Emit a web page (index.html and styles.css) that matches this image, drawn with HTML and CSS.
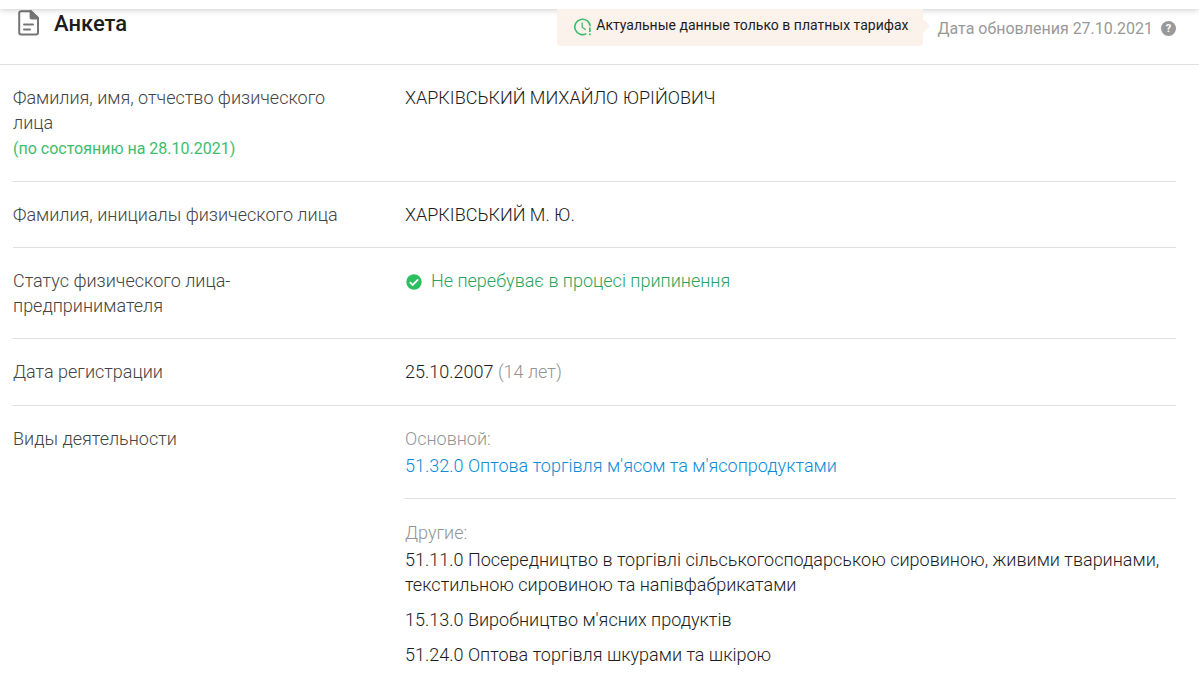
FILE: index.html
```html
<!DOCTYPE html>
<html lang="ru">
<head>
<meta charset="utf-8">
<meta name="viewport" content="width=device-width, initial-scale=1">
<title>Анкета</title>
<link rel="stylesheet" href="styles.css">
</head>
<body>
<div class="topbar"></div>
<main class="profile">
  <header class="profile-header">
    <h1 class="title">
      <svg class="title-icon" width="22" height="26" viewBox="0 0 22 26" aria-hidden="true">
        <path d="M3 1.2H13L20 8V22.5Q20 24.4 18 24.4H3.2Q1.2 24.4 1.2 22.5V3.2Q1.2 1.2 3.2 1.2Z" fill="none" stroke="#757575" stroke-width="2"/>
        <path d="M11.6 .4H13.4L20.8 7.6V9.4H13.6Q11.6 9.4 11.6 7.4Z" fill="#757575"/>
        <path d="M6 14.4H15M6 19.4H12" fill="none" stroke="#757575" stroke-width="2" stroke-linecap="round"/>
      </svg>
      <span>Анкета</span>
    </h1>
    <div class="update">
      <div class="notice">
        <svg class="notice-icon" width="18" height="18" viewBox="0 0 18 18" aria-hidden="true">
          <path d="M16.2 8.3A7.7 7.7 0 1 0 12.4 15.6" fill="none" stroke="#3dbd6c" stroke-width="1.6"/>
          <path d="M8.2 4.6V9.2L11.8 11.8" fill="none" stroke="#3dbd6c" stroke-width="1.3"/>
          <path d="M15.9 9.6V14M15.9 15.4V17.2" fill="none" stroke="#3dbd6c" stroke-width="1.7"/>
        </svg>
        <span>Актуальные данные только в платных тарифах</span>
      </div>
      <span class="date">Дата обновления 27.10.2021</span>
      <button class="help" type="button" aria-label="Справка">?</button>
    </div>
  </header>
  <dl class="rows">
    <div class="row">
      <dt>Фамилия, имя, отчество физического лица <small class="as-of">(по состоянию на 28.10.2021)</small></dt>
      <dd>ХАРКІВСЬКИЙ МИХАЙЛО ЮРІЙОВИЧ</dd>
    </div>
    <div class="row">
      <dt>Фамилия, инициалы физического лица</dt>
      <dd>ХАРКІВСЬКИЙ М. Ю.</dd>
    </div>
    <div class="row">
      <dt>Статус физического лица-предпринимателя</dt>
      <dd class="status">
        <svg class="status-icon" width="16" height="16" viewBox="0 0 16 16" aria-hidden="true">
          <circle cx="8" cy="8" r="7.7" fill="#2dbe60"/>
          <path d="M3.8 8.2L6.7 11L12.2 5.4" fill="none" stroke="#fff" stroke-width="1.8"/>
        </svg>
        <span>Не перебуває в процесі припинення</span>
      </dd>
    </div>
    <div class="row row-registered">
      <dt>Дата регистрации</dt>
      <dd>25.10.2007 <span class="muted">(14 лет)</span></dd>
    </div>
    <div class="row">
      <dt>Виды деятельности</dt>
      <dd>
        <section class="main-activity">
          <p class="muted caption">Основной:</p>
          <a class="link" href="#">51.32.0 Оптова торгівля м'ясом та м'ясопродуктами</a>
        </section>
        <section class="other-activities">
          <p class="muted caption">Другие:</p>
          <ul class="list">
            <li>51.11.0 Посередництво в торгівлі сільськогосподарською сировиною, живими тваринами, текстильною сировиною та напівфабрикатами</li>
            <li>15.13.0 Виробництво м'ясних продуктів</li>
            <li>51.24.0 Оптова торгівля шкурами та шкірою</li>
          </ul>
        </section>
      </dd>
    </div>
  </dl>
</main>
</body>
</html>
```
FILE: styles.css
```css
* {
  box-sizing: border-box;
}

body {
  margin: 0;
  background: #fff;
  color: #1c1c1c;
  font: 350 18px/25px Roboto, "Noto Sans", sans-serif;
}

.topbar {
  position: relative;
  height: 9px;
  background: #fff;
  box-shadow: 0 1px 6px rgba(0, 0, 0, 0.2);
}

.profile-header {
  display: flex;
  justify-content: space-between;
  align-items: flex-start;
  height: 56px;
  padding: 0 23px 0 18px;
  border-bottom: 1px solid #e0e0e0;
}

.title {
  display: flex;
  align-items: flex-start;
  gap: 14px;
  margin: 0;
  font-size: 22px;
  font-weight: 500;
  line-height: 30px;
}

.title-icon {
  margin-top: 1px;
}

.update {
  display: flex;
  align-items: flex-start;
}

.notice {
  position: relative;
  display: flex;
  align-items: center;
  gap: 4px;
  height: 37px;
  margin-right: 14px;
  padding: 0 15px 6px 17px;
  border-radius: 0 0 4px 4px;
  background: #fcf2ec;
  font-size: 14px;
  font-weight: 400;
  line-height: 20px;
}

.notice-icon {
  margin-top: 4px;
}

.notice::after {
  content: "";
  position: absolute;
  left: 100%;
  top: 10px;
  border: 7px solid transparent;
  border-right-width: 0;
  border-left-color: #fcf2ec;
}

.date {
  padding-top: 7px;
  color: #999;
  font-size: 16px;
  font-weight: 400;
}

.help {
  width: 15px;
  height: 15px;
  margin: 12px 0 0 8px;
  padding: 0;
  border: 0;
  border-radius: 50%;
  background: #999;
  color: #fff;
  font: 700 11px/15px Roboto, sans-serif;
}

.rows {
  margin: 0 23px 0 13px;
}

.row {
  display: grid;
  grid-template-columns: 332px minmax(0, 1fr);
  column-gap: 60px;
  padding: 20px 0;
  border-bottom: 1px solid #e0e0e0;
}

.row:last-child {
  border-bottom: 0;
}

.row-registered {
  padding-bottom: 21px;
}

dt {
  color: #444;
}

dd {
  margin: 0;
}

.as-of {
  display: block;
  margin-top: 1px;
  color: #3dbd6c;
  font-size: 16px;
  font-weight: 400;
}

.status {
  display: flex;
  gap: 9px;
  padding-left: 1px;
  color: #27a45c;
}

.status-icon {
  flex: none;
  margin-top: 6px;
}

.muted {
  color: #949494;
}

.caption {
  margin: 0 0 2px;
}

.main-activity {
  padding-bottom: 20px;
  border-bottom: 1px solid #e0e0e0;
}

.link {
  color: #0c8bd6;
  text-decoration: none;
}

.other-activities {
  padding-top: 21px;
}

.list {
  display: grid;
  gap: 10px;
  margin: 0;
  padding: 0;
  list-style: none;
}
```
